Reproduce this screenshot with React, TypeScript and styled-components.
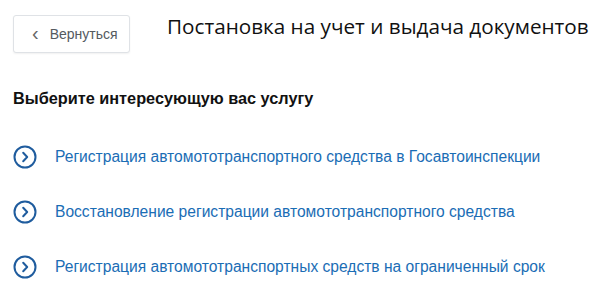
import styled, { createGlobalStyle } from "styled-components";

const GlobalStyle = createGlobalStyle`
    html, body {
        margin: 0;
        padding: 0;
        background: #fff;
    }
`

const services = [
    "Регистрация автомототранспортного средства в Госавтоинспекции",
    "Восстановление регистрации автомототранспортного средства",
    "Регистрация автомототранспортных средств на ограниченный срок",
];

const CircleArrow = () => (
    <svg width="24" height="24" viewBox="0 0 24 24" fill="none">
        <circle cx="12" cy="12" r="10.5" stroke="#1f5c9e" strokeWidth="2"/>
        <path d="M10.2 7.8 L14.2 12 L10.2 16.2" stroke="#1f5c9e" strokeWidth="2" strokeLinecap="round"
              strokeLinejoin="round"/>
    </svg>
);

export default function App() {
    return (
        <StyledPage>
            <GlobalStyle/>
            <StyledHeader>
                <BackButton>
                    <BackChevron>‹</BackChevron>
                    Вернуться
                </BackButton>
                <PageTitle>Постановка на учет и выдача документов</PageTitle>
            </StyledHeader>
            <SectionHeading>Выберите интересующую вас услугу</SectionHeading>
            <ServiceList>
                {services.map((s) => (
                    <ServiceItem key={s}>
                        <CircleArrow/>
                        <ServiceLink>{s}</ServiceLink>
                    </ServiceItem>
                ))}
            </ServiceList>
        </StyledPage>
    );
}

const StyledPage = styled.div`
    padding: 15px 0 0 13px;
    width: 600px;
    box-sizing: border-box;
`
const StyledHeader = styled.div`
    display: flex;
    align-items: flex-start;
    gap: 37px;
`
const BackButton = styled.button`
    width: 117px;
    height: 38px;
    box-sizing: border-box;
    border: 1px solid #dfe2e6;
    border-radius: 3px;
    background: #fff;
    display: flex;
    align-items: center;
    padding: 0 0 0 18px;
    gap: 11px;
    font-family: "Liberation Sans", Arial, sans-serif;
    font-size: 14px;
    color: #555a60;
    box-shadow: 0 1px 2px rgba(0, 0, 0, 0.06);
`
const BackChevron = styled.span`
    font-size: 20px;
    line-height: 1;
    margin-top: -3px;
    color: #666;
`
const PageTitle = styled.h1`
    margin: 0;
    font-family: "Open Sans", sans-serif;
    font-weight: 400;
    font-size: 20.7px;
    line-height: 22px;
    color: #111;
`
const SectionHeading = styled.h2`
    margin: 35px 0 0;
    font-family: "Liberation Sans", Arial, sans-serif;
    font-weight: 700;
    font-size: 16.3px;
    line-height: 20px;
    color: #111;
`
const ServiceList = styled.ul`
    list-style: none;
    margin: 37px 0 0;
    padding: 0;
    display: flex;
    flex-direction: column;
    gap: 31px;
`
const ServiceItem = styled.li`
    display: flex;
    align-items: center;
    gap: 18px;
    height: 24px;
`
const ServiceLink = styled.a`
    font-family: "Liberation Sans", Arial, sans-serif;
    font-size: 15.6px;
    color: #1a6db5;
    cursor: pointer;
`
